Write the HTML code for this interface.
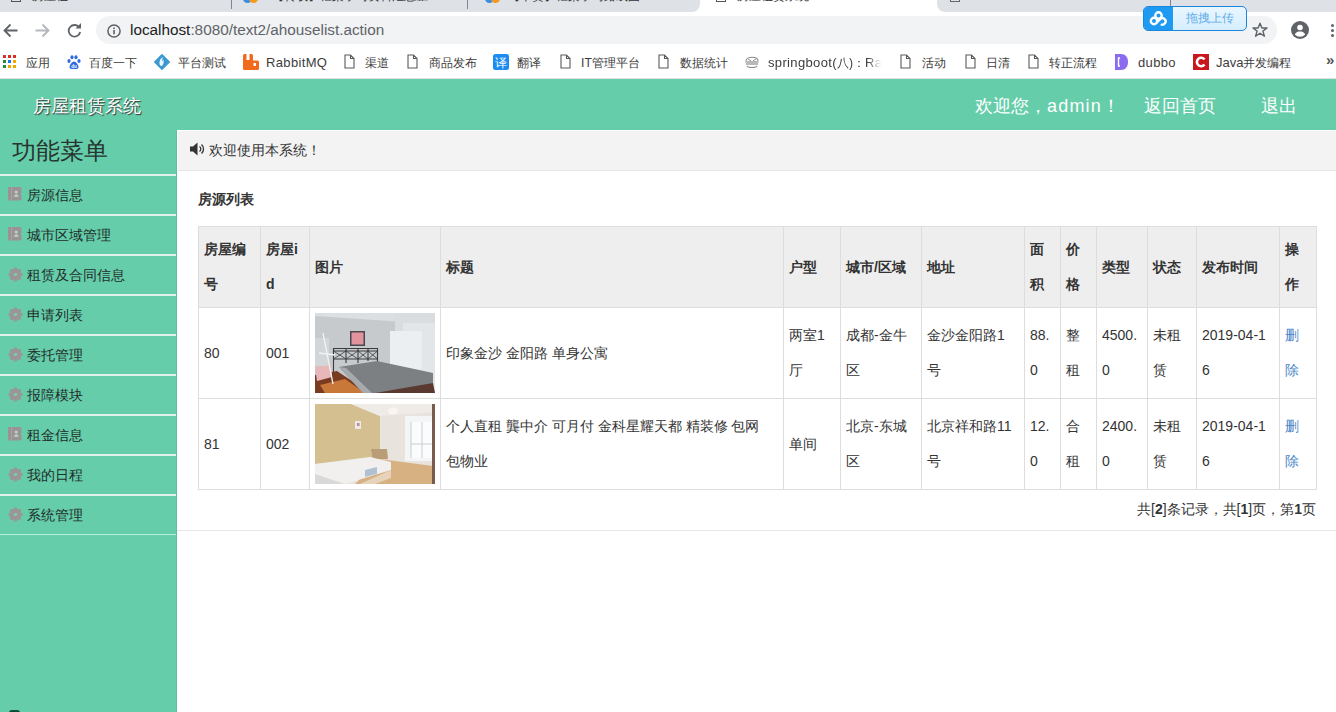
<!DOCTYPE html>
<html><head><meta charset="utf-8">
<style>
*{box-sizing:border-box;margin:0;padding:0}
html,body{width:1336px;height:712px;overflow:hidden;background:#fff;font-family:"Liberation Sans",sans-serif;color:#333}
.abs{position:absolute}
#tabs{position:absolute;left:0;top:0;width:1336px;height:12px;background:#dee1e6;overflow:hidden}
#toolbar{position:absolute;left:0;top:12px;width:1336px;height:35px;background:#fff}
#omni{position:absolute;left:96px;top:16px;width:1181px;height:28px;background:#f1f3f4;border-radius:14px}
#url{position:absolute;left:130px;top:19.5px;font-size:15.3px;line-height:20px;color:#5f6368;white-space:nowrap}
#url b{font-weight:normal;color:#202124}
#bm{position:absolute;left:0;top:47px;width:1336px;height:32px;background:#fff;border-bottom:1px solid #e2e2e2}
.bt{position:absolute;top:55px;font-size:12.2px;line-height:16px;color:#3c3c3c;white-space:nowrap}
#hdr{position:absolute;left:0;top:79px;width:1336px;height:51px;background:#66cdaa}
#side{position:absolute;left:0;top:130px;width:177px;height:582px;background:#66cdaa}
#content{position:absolute;left:177px;top:130px;width:1159px;height:582px;background:#fff}

.ht{position:absolute;font-size:18px;line-height:24px;color:#fff;white-space:nowrap}
#logo{left:33px;top:94px;text-shadow:1px 1px 1px #333;font-weight:500}
#menuTitle{position:absolute;left:12px;top:136px;font-size:24px;line-height:30px;color:#263530;white-space:nowrap}
.mi{position:absolute;left:0;width:177px;height:40px;border-top:2px solid #e0f2ea}
.mi span{position:absolute;left:27px;top:10px;font-size:14px;line-height:18px;color:#1f2f2a;white-space:nowrap}
.mi svg{position:absolute;left:8px;top:11px}
.mi svg[width="15"]{left:7.5px;top:10.5px}
#wel{position:absolute;left:178px;top:131px;width:1158px;height:40px;background:#f3f3f3;border-bottom:1px solid #e6e6e6}
#weltxt{position:absolute;left:209px;top:141px;font-size:14px;line-height:18px;color:#333;white-space:nowrap}
#h2{position:absolute;left:198px;top:190px;font-size:14px;line-height:18px;font-weight:bold;color:#333}
table{position:absolute;left:198px;top:226px;border-collapse:collapse;table-layout:fixed;width:1118px;font-size:14px;color:#333}
td,th{border:1px solid #ddd;padding:5px;line-height:35px;text-align:left;vertical-align:middle;white-space:nowrap;overflow:hidden}
th{background:#eee;font-weight:bold}
td a{color:#4a86c8;text-decoration:none}
#foot{position:absolute;right:20px;top:500px;font-size:14px;line-height:18px;color:#333;white-space:nowrap}
#hr{position:absolute;left:177px;top:530px;width:1159px;height:1px;background:#e6e6e6}
.tt{position:absolute;top:-11px;font-size:12px;line-height:14px;color:#333;white-space:nowrap}
.lt{font-size:13px;letter-spacing:0.35px}
</style></head><body>

<div id="tabs">
<div class="abs" style="left:11px;top:-8px;width:10px;height:10px;border:1.2px solid #555"></div>
<div class="tt" style="left:32px">房屋租</div>
<div class="abs" style="left:231px;top:0;width:1px;height:9px;background:#80868b"></div>
<div class="abs" style="left:243px;top:-6px;width:9px;height:9px;border-radius:50%;background:#3b8de0"></div>
<div class="abs" style="left:249px;top:-6px;width:9px;height:9px;border-radius:50%;background:#f39a1e"></div>
<div class="tt" style="left:272px">【转载】框架学习资料汇总整</div>
<div class="abs" style="left:467px;top:0;width:1px;height:9px;background:#80868b"></div>
<div class="abs" style="left:485px;top:-6px;width:9px;height:9px;border-radius:50%;background:#3b8de0"></div>
<div class="abs" style="left:491px;top:-6px;width:9px;height:9px;border-radius:50%;background:#f39a1e"></div>
<div class="tt" style="left:508px">【干货】框架学习路线图</div>
<div class="abs" style="left:692px;top:0;width:253px;height:12px;background:#fff"></div>
<div class="abs" style="left:684px;top:-2px;width:16px;height:14px;background:#dee1e6;border-radius:0 0 8px 0"></div>
<div class="abs" style="left:937px;top:-2px;width:16px;height:14px;background:#dee1e6;border-radius:0 0 0 8px"></div>
<div class="abs" style="left:716px;top:-8px;width:10px;height:10px;border:1.2px solid #555"></div>
<div class="tt" style="left:737px">房屋租赁系统</div>
<div class="abs" style="left:950px;top:-8px;width:10px;height:10px;border:1.2px solid #666"></div>
<div class="tt" style="left:1040px;color:#666">a/b/c/d</div>
<div class="abs" style="left:1170px;top:0;width:1px;height:9px;background:#80868b"></div>
</div>
<div id="toolbar"></div>
<svg class="abs" style="left:3px;top:23px" width="15" height="15" viewBox="0 0 15 15"><path d="M14.5 7.5H2M7.5 1.5L1.5 7.5L7.5 13.5" stroke="#5f6368" stroke-width="1.8" fill="none"/></svg>
<svg class="abs" style="left:35px;top:23px" width="15" height="15" viewBox="0 0 15 15"><path d="M0.5 7.5H13M7.5 1.5L13.5 7.5L7.5 13.5" stroke="#b4b7bb" stroke-width="1.8" fill="none"/></svg>
<svg class="abs" style="left:67px;top:23px" width="15" height="15" viewBox="0 0 15 15"><path d="M12.3 4.5A5.8 5.8 0 1 0 13.2 9" stroke="#5f6368" stroke-width="1.8" fill="none"/><path d="M8.5 5.5H14V0Z" fill="#5f6368"/></svg>
<div id="omni"></div>
<svg class="abs" style="left:107px;top:24px" width="14" height="14" viewBox="0 0 14 14"><circle cx="7" cy="7" r="6.1" stroke="#5f6368" stroke-width="1.5" fill="none"/><rect x="6.2" y="6" width="1.6" height="4.3" fill="#5f6368"/><rect x="6.2" y="3.5" width="1.6" height="1.6" fill="#5f6368"/></svg>
<div id="url"><b>localhost</b>:8080/text2/ahouselist.action</div>
<svg class="abs" style="left:1252px;top:22px" width="16" height="16" viewBox="0 0 16 16"><path d="M8 1.2L9.9 6H15L10.9 9.1L12.4 14.3L8 11.2L3.6 14.3L5.1 9.1L1 6H6.1Z" stroke="#5f6368" stroke-width="1.4" fill="none" stroke-linejoin="round"/></svg>
<svg class="abs" style="left:1291px;top:21px" width="18" height="18" viewBox="0 0 18 18"><circle cx="9" cy="9" r="9" fill="#5f6368"/><circle cx="9" cy="6.5" r="2.8" fill="#fff"/><path d="M3.8 13.5C5 11 7 10.5 9 10.5S13 11 14.2 13.5A7 7 0 0 1 3.8 13.5Z" fill="#fff"/></svg>
<div class="abs" style="left:1331px;top:24px;width:3px;height:3px;border-radius:50%;background:#5f6368;box-shadow:0 5px 0 #5f6368,0 10px 0 #5f6368"></div>
<div class="abs" style="left:1143px;top:6px;width:104px;height:25px;border:1px solid #1a86dc;border-radius:5px;background:linear-gradient(#e9f6ff,#d6eeff);overflow:hidden">
<div class="abs" style="left:0;top:0;width:29px;height:23px;background:#1f9af2"></div>
<svg class="abs" style="left:5px;top:3px" width="20" height="17" viewBox="0 0 20 17"><g fill="none" stroke="#fff" stroke-width="2.4"><circle cx="9.5" cy="5.5" r="3.2"/><circle cx="5" cy="11" r="3.2"/><path d="M7.5 12.5L11 9.3A3.2 3.2 0 1 1 11.8 14.2"/></g></svg>
<div class="abs" style="left:42px;top:4px;font-size:12px;line-height:15px;color:#63ade8;white-space:nowrap">拖拽上传</div>
</div>
<div id="bm"></div>
<svg class="abs" style="left:3px;top:55px" width="14" height="14" viewBox="0 0 14 14"><rect x="0" y="0" width="3" height="3" fill="#d93025"/><rect x="5" y="0" width="3" height="3" fill="#d93025"/><rect x="10" y="0" width="3" height="3" fill="#d93025"/><rect x="0" y="5" width="3" height="3" fill="#1e8e3e"/><rect x="5" y="5" width="3" height="3" fill="#1a73e8"/><rect x="10" y="5" width="3" height="3" fill="#f2a600"/><rect x="0" y="10" width="3" height="3" fill="#1e8e3e"/><rect x="5" y="10" width="3" height="3" fill="#f2a600"/><rect x="10" y="10" width="3" height="3" fill="#f2a600"/></svg>
<div class="bt" style="left:26px">应用</div>
<svg class="abs" style="left:67px;top:55px" width="14" height="14" viewBox="0 0 14 14"><g fill="#2f6be0"><ellipse cx="2" cy="6" rx="1.6" ry="2"/><ellipse cx="5" cy="2.3" rx="1.6" ry="2"/><ellipse cx="9" cy="2.3" rx="1.6" ry="2"/><ellipse cx="12" cy="6" rx="1.6" ry="2"/><path d="M7 6.5C5 6.5 2.5 10 2.5 12S4 14 7 14S11.5 14 11.5 12S9 6.5 7 6.5Z"/></g><text x="7" y="12.6" font-size="4.5" fill="#fff" text-anchor="middle" font-family="Liberation Sans" font-weight="bold">du</text></svg>
<div class="bt" style="left:89px">百度一下</div>
<svg class="abs" style="left:154px;top:54px" width="16" height="16" viewBox="0 0 16 16"><path d="M8 0.3L15.7 8L8 15.7L0.3 8Z" fill="#3b98d0" stroke="#3b98d0" stroke-width="1" stroke-linejoin="round"/><path d="M9 3.2C6 4.5 5.2 7.5 5.6 10.3C6 12 7.5 12.5 8.3 11.5C9.8 9.8 10.3 7.5 9.2 5.8L8.5 7.5C8.2 6 8.3 4.5 9 3.2Z" fill="#e9f6fc"/></svg>
<div class="bt" style="left:178px">平台测试</div>
<svg class="abs" style="left:243px;top:54px" width="16" height="16" viewBox="0 0 16 16"><path d="M0 1.5Q0 0 1.5 0H3.5V6H6.5V0H8.5Q10 0 10 1.5V6.5H14.5Q16 6.5 16 8V14.5Q16 16 14.5 16H1.5Q0 16 0 14.5Z" fill="#f26a1b"/><rect x="10.5" y="9" width="2.5" height="3" fill="#fff"/></svg>
<div class="bt" style="left:266px"><span class="lt">RabbitMQ</span></div>
<svg class="abs" style="left:344px;top:54px" width="11" height="15" viewBox="0 0 11 15"><path d="M1 1H6.5L10 4.5V14H1Z M6.5 1V4.5H10" fill="none" stroke="#5a5a5a" stroke-width="1.1" stroke-linejoin="miter"/></svg>
<div class="bt" style="left:365px">渠道</div>
<svg class="abs" style="left:407px;top:54px" width="11" height="15" viewBox="0 0 11 15"><path d="M1 1H6.5L10 4.5V14H1Z M6.5 1V4.5H10" fill="none" stroke="#5a5a5a" stroke-width="1.1" stroke-linejoin="miter"/></svg>
<div class="bt" style="left:429px">商品发布</div>
<svg class="abs" style="left:493px;top:54px" width="16" height="16" viewBox="0 0 16 16"><rect width="16" height="16" rx="2.5" fill="#1d8cf0"/><text x="8" y="12.5" font-size="11.5" fill="#fff" text-anchor="middle">译</text></svg>
<div class="bt" style="left:517px">翻译</div>
<svg class="abs" style="left:560px;top:54px" width="11" height="15" viewBox="0 0 11 15"><path d="M1 1H6.5L10 4.5V14H1Z M6.5 1V4.5H10" fill="none" stroke="#5a5a5a" stroke-width="1.1" stroke-linejoin="miter"/></svg>
<div class="bt" style="left:581px">IT管理平台</div>
<svg class="abs" style="left:658px;top:54px" width="11" height="15" viewBox="0 0 11 15"><path d="M1 1H6.5L10 4.5V14H1Z M6.5 1V4.5H10" fill="none" stroke="#5a5a5a" stroke-width="1.1" stroke-linejoin="miter"/></svg>
<div class="bt" style="left:680px">数据统计</div>
<svg class="abs" style="left:744px;top:54px" width="16" height="16" viewBox="0 0 16 16"><g fill="none" stroke="#8a8a8a" stroke-width="1.2"><path d="M2 7C2 2 14 2 14 7"/><path d="M1.5 8H14.5"/><path d="M2 10H14"/><path d="M3 12C4 14 12 14 13 12"/></g><path d="M4 5L7 7M12 5L9 7" stroke="#8a8a8a" stroke-width="1"/></svg>
<div class="bt" style="left:768px;width:113px;overflow:hidden;-webkit-mask-image:linear-gradient(90deg,#000 88%,transparent)"><span class="lt">springboot(</span>八)：<span class="lt">Ra</span></div>
<svg class="abs" style="left:900px;top:54px" width="11" height="15" viewBox="0 0 11 15"><path d="M1 1H6.5L10 4.5V14H1Z M6.5 1V4.5H10" fill="none" stroke="#5a5a5a" stroke-width="1.1" stroke-linejoin="miter"/></svg>
<div class="bt" style="left:922px">活动</div>
<svg class="abs" style="left:965px;top:54px" width="11" height="15" viewBox="0 0 11 15"><path d="M1 1H6.5L10 4.5V14H1Z M6.5 1V4.5H10" fill="none" stroke="#5a5a5a" stroke-width="1.1" stroke-linejoin="miter"/></svg>
<div class="bt" style="left:986px">日清</div>
<svg class="abs" style="left:1028px;top:54px" width="11" height="15" viewBox="0 0 11 15"><path d="M1 1H6.5L10 4.5V14H1Z M6.5 1V4.5H10" fill="none" stroke="#5a5a5a" stroke-width="1.1" stroke-linejoin="miter"/></svg>
<div class="bt" style="left:1049px">转正流程</div>
<svg class="abs" style="left:1115px;top:54px" width="13" height="16" viewBox="0 0 13 16"><path d="M0 0H6C10.5 0 13 3.5 13 8S10.5 16 6 16H0Z" fill="#8b6cf0"/><path d="M5 4H3.5V12H5" stroke="#fff" stroke-width="1.4" fill="none"/></svg>
<div class="bt" style="left:1138px"><span class="lt">dubbo</span></div>
<svg class="abs" style="left:1193px;top:54px" width="16" height="16" viewBox="0 0 16 16"><rect width="16" height="16" fill="#c9171e"/><path d="M11.5 5.5A4.2 4.2 0 1 0 11.5 10.5" stroke="#fff" stroke-width="2.6" fill="none"/></svg>
<div class="bt" style="left:1216px"><span style="font-size:13px">Java</span>并发编程</div>
<div class="bt" style="left:1326px;top:52px;font-size:15px;font-weight:bold;color:#555">»</div>

<div id="hdr"></div>
<div id="side"></div>
<div id="content"></div>

<div class="ht" id="logo">房屋租赁系统</div>
<div class="ht" style="left:975px;top:94px">欢迎您，<span style="letter-spacing:1.2px">admin</span>！</div>
<div class="ht" style="left:1144px;top:94px">返回首页</div>
<div class="ht" style="left:1261px;top:94px">退出</div>
<div id="menuTitle">功能菜单</div>
<div class="mi" style="top:174px"><svg width="14" height="14" viewBox="0 0 14 14"><path d="M0 0H12Q13.5 0 13.5 1.5V5.5L12.5 6.8L13.5 8V12Q13.5 13.5 12 13.5H0Z" fill="#999393"/><rect x="3" y="0" width="1" height="13.5" fill="#a8a2a2"/><circle cx="8.2" cy="5" r="1.5" fill="#b9d6c9"/><path d="M5.8 9.8Q6 7.3 8.2 7.3T10.6 9.8Z" fill="#b9d6c9"/></svg><span>房源信息</span></div>
<div class="mi" style="top:214px"><svg width="14" height="14" viewBox="0 0 14 14"><path d="M0 0H12Q13.5 0 13.5 1.5V5.5L12.5 6.8L13.5 8V12Q13.5 13.5 12 13.5H0Z" fill="#999393"/><rect x="3" y="0" width="1" height="13.5" fill="#a8a2a2"/><circle cx="8.2" cy="5" r="1.5" fill="#b9d6c9"/><path d="M5.8 9.8Q6 7.3 8.2 7.3T10.6 9.8Z" fill="#b9d6c9"/></svg><span>城市区域管理</span></div>
<div class="mi" style="top:254px"><svg width="15" height="15" viewBox="0 0 15 15"><g fill="#9a9696"><circle cx="7.5" cy="7.5" r="5.3"/><rect x="5.7" y="0.5" width="3.6" height="14" rx="1.2"/><rect x="5.7" y="0.5" width="3.6" height="14" rx="1.2" transform="rotate(45 7.5 7.5)"/><rect x="5.7" y="0.5" width="3.6" height="14" rx="1.2" transform="rotate(90 7.5 7.5)"/><rect x="5.7" y="0.5" width="3.6" height="14" rx="1.2" transform="rotate(135 7.5 7.5)"/></g><circle cx="7.5" cy="7.5" r="1.7" fill="#7fc9ae"/></svg><span>租赁及合同信息</span></div>
<div class="mi" style="top:294px"><svg width="15" height="15" viewBox="0 0 15 15"><g fill="#9a9696"><circle cx="7.5" cy="7.5" r="5.3"/><rect x="5.7" y="0.5" width="3.6" height="14" rx="1.2"/><rect x="5.7" y="0.5" width="3.6" height="14" rx="1.2" transform="rotate(45 7.5 7.5)"/><rect x="5.7" y="0.5" width="3.6" height="14" rx="1.2" transform="rotate(90 7.5 7.5)"/><rect x="5.7" y="0.5" width="3.6" height="14" rx="1.2" transform="rotate(135 7.5 7.5)"/></g><circle cx="7.5" cy="7.5" r="1.7" fill="#7fc9ae"/></svg><span>申请列表</span></div>
<div class="mi" style="top:334px"><svg width="15" height="15" viewBox="0 0 15 15"><g fill="#9a9696"><circle cx="7.5" cy="7.5" r="5.3"/><rect x="5.7" y="0.5" width="3.6" height="14" rx="1.2"/><rect x="5.7" y="0.5" width="3.6" height="14" rx="1.2" transform="rotate(45 7.5 7.5)"/><rect x="5.7" y="0.5" width="3.6" height="14" rx="1.2" transform="rotate(90 7.5 7.5)"/><rect x="5.7" y="0.5" width="3.6" height="14" rx="1.2" transform="rotate(135 7.5 7.5)"/></g><circle cx="7.5" cy="7.5" r="1.7" fill="#7fc9ae"/></svg><span>委托管理</span></div>
<div class="mi" style="top:374px"><svg width="15" height="15" viewBox="0 0 15 15"><g fill="#9a9696"><circle cx="7.5" cy="7.5" r="5.3"/><rect x="5.7" y="0.5" width="3.6" height="14" rx="1.2"/><rect x="5.7" y="0.5" width="3.6" height="14" rx="1.2" transform="rotate(45 7.5 7.5)"/><rect x="5.7" y="0.5" width="3.6" height="14" rx="1.2" transform="rotate(90 7.5 7.5)"/><rect x="5.7" y="0.5" width="3.6" height="14" rx="1.2" transform="rotate(135 7.5 7.5)"/></g><circle cx="7.5" cy="7.5" r="1.7" fill="#7fc9ae"/></svg><span>报障模块</span></div>
<div class="mi" style="top:414px"><svg width="14" height="14" viewBox="0 0 14 14"><path d="M0 0H12Q13.5 0 13.5 1.5V5.5L12.5 6.8L13.5 8V12Q13.5 13.5 12 13.5H0Z" fill="#999393"/><rect x="3" y="0" width="1" height="13.5" fill="#a8a2a2"/><circle cx="8.2" cy="5" r="1.5" fill="#b9d6c9"/><path d="M5.8 9.8Q6 7.3 8.2 7.3T10.6 9.8Z" fill="#b9d6c9"/></svg><span>租金信息</span></div>
<div class="mi" style="top:454px"><svg width="15" height="15" viewBox="0 0 15 15"><g fill="#9a9696"><circle cx="7.5" cy="7.5" r="5.3"/><rect x="5.7" y="0.5" width="3.6" height="14" rx="1.2"/><rect x="5.7" y="0.5" width="3.6" height="14" rx="1.2" transform="rotate(45 7.5 7.5)"/><rect x="5.7" y="0.5" width="3.6" height="14" rx="1.2" transform="rotate(90 7.5 7.5)"/><rect x="5.7" y="0.5" width="3.6" height="14" rx="1.2" transform="rotate(135 7.5 7.5)"/></g><circle cx="7.5" cy="7.5" r="1.7" fill="#7fc9ae"/></svg><span>我的日程</span></div>
<div class="mi" style="top:494px"><svg width="15" height="15" viewBox="0 0 15 15"><g fill="#9a9696"><circle cx="7.5" cy="7.5" r="5.3"/><rect x="5.7" y="0.5" width="3.6" height="14" rx="1.2"/><rect x="5.7" y="0.5" width="3.6" height="14" rx="1.2" transform="rotate(45 7.5 7.5)"/><rect x="5.7" y="0.5" width="3.6" height="14" rx="1.2" transform="rotate(90 7.5 7.5)"/><rect x="5.7" y="0.5" width="3.6" height="14" rx="1.2" transform="rotate(135 7.5 7.5)"/></g><circle cx="7.5" cy="7.5" r="1.7" fill="#7fc9ae"/></svg><span>系统管理</span></div>

<div class="mi" style="top:534px;border-top:1px solid #b2f2da"></div>
<div class="abs" style="left:176px;top:130px;width:1px;height:582px;background:#5fbf9c"></div>
<div id="wel"></div>
<div id="weltxt">欢迎使用本系统！</div>
<svg class="abs" style="left:190px;top:142px" width="15" height="14" viewBox="0 0 15 14"><path d="M0 4.5h3l4.5-4v13l-4.5-4h-3z" fill="#333"/><path d="M9.5 4.5a3 3 0 0 1 0 5" stroke="#333" stroke-width="1.3" fill="none"/><path d="M11.5 2.5a6 6 0 0 1 0 9" stroke="#333" stroke-width="1.3" fill="none"/></svg>
<div id="h2">房源列表</div>
<table>
<colgroup><col style="width:62px"><col style="width:49px"><col style="width:131px"><col style="width:343px"><col style="width:57px"><col style="width:81px"><col style="width:103px"><col style="width:36px"><col style="width:36px"><col style="width:51px"><col style="width:49px"><col style="width:83px"><col style="width:37px"></colgroup>
<tr><th>房屋编<br>号</th><th>房屋i<br>d</th><th>图片</th><th>标题</th><th>户型</th><th>城市/区域</th><th>地址</th><th>面<br>积</th><th>价<br>格</th><th>类型</th><th>状态</th><th>发布时间</th><th>操<br>作</th></tr>
<tr><td>80</td><td>001</td><td style="line-height:0"><svg width="120" height="80" viewBox="0 0 120 80" style="display:block"><rect width="120" height="80" fill="#c6cacd"/>
<polygon points="0,0 120,0 120,10 90,9 0,3" fill="#dcdfe1"/>
<polygon points="80,0 120,0 120,80 80,80" fill="#d9dde0"/>
<rect x="88" y="10" width="32" height="70" fill="#e3e6e8"/>
<rect x="75" y="18" width="32" height="38" fill="#eceff1"/>
<rect x="35" y="18" width="15" height="15" fill="#4a4a4e"/><rect x="36.5" y="19.5" width="12" height="12" fill="#e2949e"/>
<rect x="0" y="25" width="14" height="28" fill="#d3d6d8"/>
<g stroke="#3a3a3c" stroke-width="1.1" fill="none"><path d="M18.5 62V35.5H62.5V50"/><path d="M18.5 38H62.5M18.5 46H62.5M31 35.5V50M43 35.5V50M53 35.5V48"/><path d="M18.5 38L31 46M31 38L18.5 46M31 38L43 46M43 38L31 46M43 38L53 46M53 38L43 46M53 38L62.5 46M62.5 38L53 46" stroke-width="0.8"/></g>
<polygon points="0,62 22,58 55,80 0,80" fill="#7a3c20"/>
<polygon points="5,72 30,66 50,80 10,80" fill="#c87838"/>
<polygon points="0,54 16,52 17,64 2,68" fill="#e7b7b9"/>
<g stroke="#f2f2f2" stroke-width="1.3"><path d="M8 20L18 71M4 40L20 42"/></g>
<polygon points="24,54 62,48 118,60 118,73 62,80 48,80" fill="#7c8083"/>
<polygon points="24,54 48,80 57,80 31,55" fill="#a6aaad"/>
<polygon points="60,80 118,70 120,80" fill="#5a3a30"/>
</svg></td><td>印象金沙 金阳路 单身公寓</td><td>两室1<br>厅</td><td>成都-金牛<br>区</td><td>金沙金阳路1<br>号</td><td>88.<br>0</td><td>整<br>租</td><td>4500.<br>0</td><td>未租<br>赁</td><td>2019-04-1<br>6</td><td><a>删<br>除</a></td></tr>
<tr><td>81</td><td>002</td><td style="line-height:0"><svg width="120" height="80" viewBox="0 0 120 80" style="display:block"><rect width="120" height="80" fill="#e8e3dc"/>
<polygon points="0,0 36,0 65,12 65,55 0,60" fill="#d3bf90"/>
<polygon points="36,0 120,0 120,8 65,12" fill="#efece8"/>
<ellipse cx="78" cy="7" rx="5" ry="3.5" fill="#faf6ef"/>
<rect x="90" y="12" width="29" height="45" fill="#f4f5f6"/>
<rect x="96" y="18" width="22" height="36" fill="#fbfcfd"/>
<g stroke="#c9cdd0" stroke-width="1"><path d="M96 18V54M107 18V54M96 40H118"/></g>
<rect x="40" y="17" width="6" height="8" fill="#eee8e8"/><rect x="42" y="19" width="2.5" height="3" fill="#b98aa0"/>
<polygon points="56,45 72,45 73,55 58,55" fill="#b99c78"/>
<polygon points="65,55 118,62 120,80 40,80" fill="#d8b183"/>
<polygon points="0,60 55,53 76,58 76,66 30,80 0,80" fill="#f1f0ee"/>
<polygon points="0,70 30,80 0,80" fill="#d9d9d9"/>
<polygon points="50,66 62,63 62,70 50,73" fill="#b0c2d2"/>
<polygon points="45,80 76,66 76,74 60,80" fill="#e7d3bb"/>
<rect x="117" y="0" width="3" height="80" fill="#7a5a4a"/>
</svg></td><td>个人直租 龔中介 可月付 金科星耀天都 精装修 包网<br>包物业</td><td>单间</td><td>北京-东城<br>区</td><td>北京祥和路11<br>号</td><td>12.<br>0</td><td>合<br>租</td><td>2400.<br>0</td><td>未租<br>赁</td><td>2019-04-1<br>6</td><td><a>删<br>除</a></td></tr>
</table>
<div id="foot">共[<b>2</b>]条记录，共[<b>1</b>]页，第<b>1</b>页</div>
<div id="hr"></div>
<div class="abs" style="left:9px;top:710px;width:11px;height:4px;border-radius:3px 3px 0 0;background:#0d4d3a"></div>
</body></html>
